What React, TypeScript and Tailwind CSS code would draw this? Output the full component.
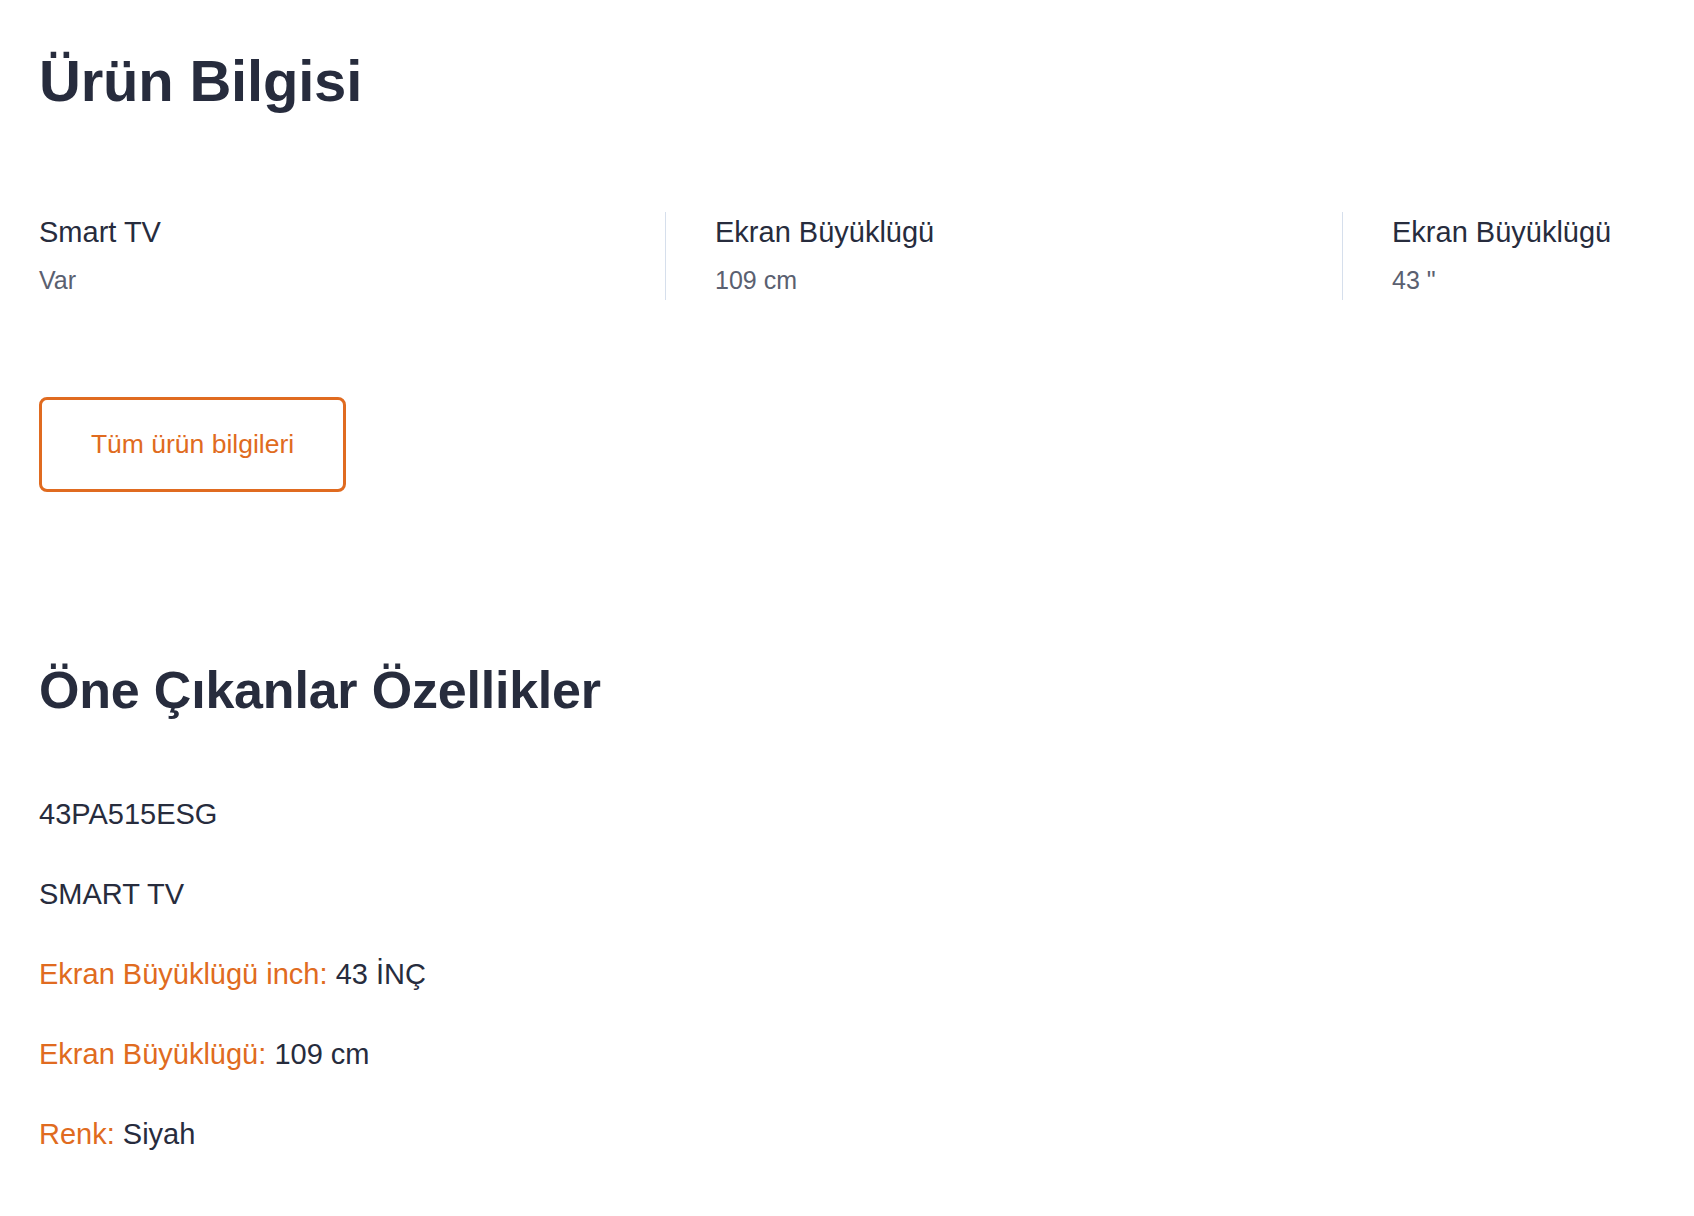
import React from 'react';

interface Spec {
  label: string;
  value: string;
}

interface Feature {
  key?: string;
  text: string;
}

const specs: Spec[] = [
  { label: 'Smart TV', value: 'Var' },
  { label: 'Ekran Büyüklügü', value: '109 cm' },
  { label: 'Ekran Büyüklügü', value: '43 "' },
];

const features: Feature[] = [
  { text: '43PA515ESG' },
  { text: 'SMART TV' },
  { key: 'Ekran Büyüklügü inch:', text: '43 İNÇ' },
  { key: 'Ekran Büyüklügü:', text: '109 cm' },
  { key: 'Renk:', text: 'Siyah' },
];

export default function App() {
  return (
    <div
      className="min-h-screen w-full overflow-hidden bg-white pl-[39px] text-[#272c3d]"
      style={{ fontFamily: '"Liberation Sans", Arial, sans-serif' }}
    >
      {/* Ürün Bilgisi */}
      <h1 className="pt-[49px] text-[58px] font-bold leading-[64px] tracking-[-0.2px]">
        Ürün Bilgisi
      </h1>

      <div className="mt-[99px] flex">
        {specs.map((spec, idx) => (
          <div
            key={idx}
            className={
              idx === 0
                ? 'w-[626px] shrink-0'
                : 'w-[677px] shrink-0 border-l-[1.5px] border-[#d6dfec] pl-[49px]'
            }
          >
            <div className="text-[29px] leading-[40px] whitespace-nowrap">{spec.label}</div>
            <div className="mt-[11px] pb-[3px] text-[25px] leading-[34px] text-[#5a6070] whitespace-nowrap">
              {spec.value}
            </div>
          </div>
        ))}
      </div>

      <button className="mt-[97px] flex h-[95px] w-[307px] items-center justify-center rounded-[8px] border-[3px] border-[#e06b20] text-[26.5px] text-[#e06b20]">
        Tüm ürün bilgileri
      </button>

      {/* Öne Çıkanlar Özellikler */}
      <h2 className="mt-[166px] text-[52px] font-bold leading-[64px] tracking-[-0.2px]">
        Öne Çıkanlar Özellikler
      </h2>

      <ul className="mt-[52px] pb-[40px]">
        {features.map((f, idx) => (
          <li key={idx} className="text-[29px] leading-[80px]">
            {f.key && <span className="text-[#e06b20]">{f.key} </span>}
            <span>{f.text}</span>
          </li>
        ))}
      </ul>
    </div>
  );
}
